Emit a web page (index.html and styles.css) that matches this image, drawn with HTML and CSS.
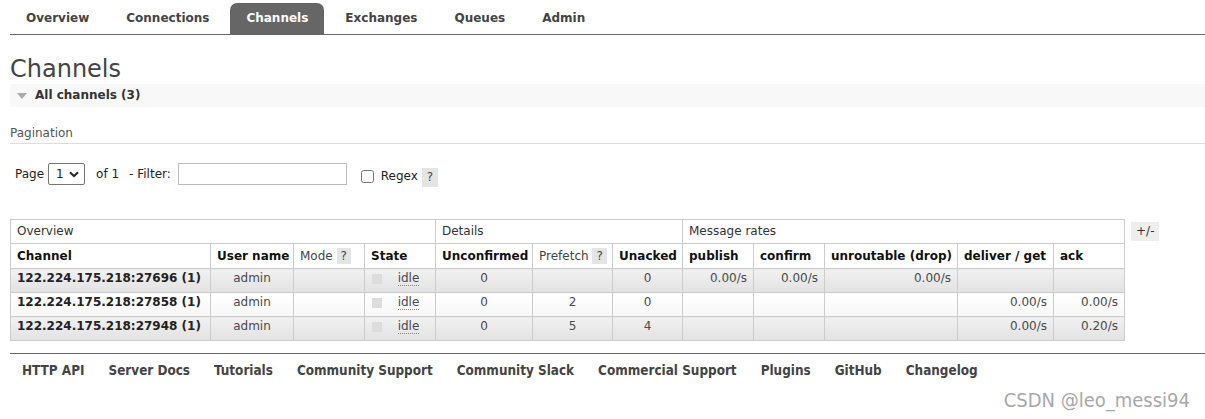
FILE: index.html
```
<!DOCTYPE html>
<html lang="en">
<head>
<meta charset="utf-8">
<title>RabbitMQ Management - Channels</title>
<link rel="stylesheet" href="styles.css">
</head>
<body>
<nav class="nav">
  <ul class="tabs">
    <li class="tab">Overview</li>
    <li class="tab">Connections</li>
    <li class="tab active">Channels</li>
    <li class="tab">Exchanges</li>
    <li class="tab">Queues</li>
    <li class="tab">Admin</li>
  </ul>
</nav>
<main class="main">
  <h1 class="title">Channels</h1>
  <div class="section-head"><span class="tri"></span>All channels (3)</div>
  <h3 class="pag-title">Pagination</h3>
  <div class="pag-row">
    <span class="lbl">Page</span>
    <span class="select-wrap">
      <select class="page-select"><option>1</option></select>
      <svg class="chev" width="10" height="7" viewBox="0 0 10 7"><path d="M1 1.2 L5 5.2 L9 1.2" fill="none" stroke="#222" stroke-width="2"/></svg>
    </span>
    <span class="lbl of">of 1</span>
    <span class="lbl filt">- Filter:</span>
    <input class="filter" type="text">
    <label class="regex"><input class="cb" type="checkbox"> Regex</label>
    <span class="help help-lg">?</span>
  </div>
  <div class="table-wrap">
    <table class="list">
      <colgroup>
        <col class="c200"><col class="c83"><col class="c71"><col class="c71">
        <col class="c97"><col class="c80"><col class="c70">
        <col class="c71"><col class="c71"><col class="c133"><col class="c96"><col class="c71">
      </colgroup>
      <thead>
        <tr class="group">
          <th colspan="4">Overview</th>
          <th colspan="3">Details</th>
          <th colspan="5">Message rates</th>
        </tr>
        <tr class="heads">
          <th>Channel</th>
          <th>User name</th>
          <th class="norm">Mode <span class="help">?</span></th>
          <th>State</th>
          <th>Unconfirmed</th>
          <th class="norm">Prefetch <span class="help">?</span></th>
          <th>Unacked</th>
          <th>publish</th>
          <th>confirm</th>
          <th>unroutable (drop)</th>
          <th>deliver / get</th>
          <th>ack</th>
        </tr>
      </thead>
      <tbody>
        <tr class="alt1">
          <td class="name">122.224.175.218:27696 (1)</td>
          <td class="c">admin</td>
          <td></td>
          <td class="state"><span class="sq"></span><abbr class="idle">idle</abbr></td>
          <td class="c">0</td>
          <td class="c"></td>
          <td class="c">0</td>
          <td class="r">0.00/s</td>
          <td class="r">0.00/s</td>
          <td class="r">0.00/s</td>
          <td class="r"></td>
          <td class="r"></td>
        </tr>
        <tr class="alt2">
          <td class="name">122.224.175.218:27858 (1)</td>
          <td class="c">admin</td>
          <td></td>
          <td class="state"><span class="sq"></span><abbr class="idle">idle</abbr></td>
          <td class="c">0</td>
          <td class="c">2</td>
          <td class="c">0</td>
          <td class="r"></td>
          <td class="r"></td>
          <td class="r"></td>
          <td class="r">0.00/s</td>
          <td class="r">0.00/s</td>
        </tr>
        <tr class="alt1">
          <td class="name">122.224.175.218:27948 (1)</td>
          <td class="c">admin</td>
          <td></td>
          <td class="state"><span class="sq"></span><abbr class="idle">idle</abbr></td>
          <td class="c">0</td>
          <td class="c">5</td>
          <td class="c">4</td>
          <td class="r"></td>
          <td class="r"></td>
          <td class="r"></td>
          <td class="r">0.00/s</td>
          <td class="r">0.20/s</td>
        </tr>
      </tbody>
    </table>
    <span class="plusminus">+/-</span>
  </div>
</main>
<footer class="footer">
  <ul class="links">
    <li>HTTP API</li>
    <li>Server Docs</li>
    <li>Tutorials</li>
    <li>Community Support</li>
    <li>Community Slack</li>
    <li>Commercial Support</li>
    <li>Plugins</li>
    <li>GitHub</li>
    <li>Changelog</li>
  </ul>
</footer>
<div class="watermark">CSDN @leo_messi94</div>
</body>
</html>
```
FILE: styles.css
```
html, body {
  margin: 0;
  padding: 0;
  background: #fff;
}
body {
  padding-left: 10px;
  font-family: "DejaVu Sans", Verdana, sans-serif;
  font-size: 12px;
  color: #444;
  position: relative;
  height: 419px;
  box-sizing: border-box;
  overflow: hidden;
}

/* nav */
.nav {
  padding-top: 3px;
  border-bottom: 1px solid #666;
}
.tabs {
  list-style: none;
  margin: 0;
  padding: 0;
  display: flex;
  gap: 5px;
}
.tab {
  font-weight: bold;
  font-size: 12px;
  line-height: 15px;
  padding: 8px 16px;
  color: #444;
  border-radius: 7px 7px 0 0;
}
.tab.active {
  background: #666;
  color: #fff;
}

/* heading */
.title {
  margin: 20px 0 0;
  font-size: 24px;
  line-height: 28px;
  font-weight: normal;
  color: #444;
}
.section-head {
  margin-top: 1px;
  height: 23px;
  line-height: 23px;
  background: #f8f8f8;
  font-weight: bold;
  color: #333;
  display: flex;
  align-items: center;
}
.tri {
  width: 0;
  height: 0;
  border-left: 5px solid transparent;
  border-right: 5px solid transparent;
  border-top: 6px solid #aaa;
  margin: 1px 8px 0 7px;
}

.pag-title {
  margin: 19px 0 0;
  font-size: 12px;
  line-height: 15px;
  font-weight: normal;
  color: #555;
  padding-bottom: 2px;
  border-bottom: 1px solid #ddd;
}

.pag-row {
  margin-top: 19px;
  padding-left: 5px;
  display: flex;
  align-items: center;
  height: 22px;
  color: #222;
}
.lbl { line-height: 15px; }
.select-wrap {
  position: relative;
  margin-left: 4px;
  display: inline-block;
  width: 37px;
  height: 22px;
}
.page-select {
  appearance: none;
  -webkit-appearance: none;
  width: 37px;
  height: 22px;
  border: 1px solid #767676;
  border-radius: 2px;
  background: #fff;
  font-family: "DejaVu Sans", Verdana, sans-serif;
  font-size: 12px;
  color: #222;
  padding: 0 0 0 7px;
  margin: 0;
}
.chev {
  position: absolute;
  right: 6px;
  top: 8px;
  pointer-events: none;
}
.of { margin-left: 11px; }
.filt { margin-left: 10px; }
.filter {
  margin: 0 0 0 7px;
  width: 169px;
  height: 22px;
  box-sizing: border-box;
  border: 1px solid #bbb;
  padding: 0 3px;
}
.regex {
  margin-left: 14px;
  display: flex;
  align-items: center;
  margin-top: 4px;
}
.cb {
  margin: 0 7px 0 0;
  width: 13px;
  height: 13px;
}
.help {
  display: inline-block;
  background: #e4e4e4;
  color: #444;
  font-weight: normal;
  padding: 0 4px;
  line-height: 16px;
}
.help-lg {
  margin-left: 4px;
  margin-top: 6px;
  padding: 1px 5px;
  line-height: 17px;
}

/* table */
.table-wrap {
  margin-top: 34px;
  display: flex;
  align-items: flex-start;
}
.list {
  border-collapse: collapse;
  table-layout: fixed;
  width: 1114px;
}
.c200 { width: 200px; }
.c83 { width: 83px; }
.c71 { width: 71px; }
.c70 { width: 70px; }
.c97 { width: 97px; }
.c80 { width: 80px; }
.c133 { width: 133px; }
.c96 { width: 96px; }
.list th, .list td {
  border: 1px solid #ccc;
  padding: 4px 6px;
  height: 15px;
  line-height: 15px;
  font-size: 12px;
  white-space: nowrap;
  overflow: hidden;
}
.list th {
  text-align: left;
  font-weight: bold;
  color: #111;
  background: #fff;
}
.list .group th {
  font-weight: normal;
  color: #333;
}
.list th.norm { font-weight: normal; color: #444; }
.list td {
  color: #4a4a4a;
  padding: 2px 6px 6px;
}
.list td.name { font-weight: bold; color: #222; }
.list td.c { text-align: center; }
.list td.r { text-align: right; }
.alt1 td { background: linear-gradient(#f1f1f1, #e2e2e2); }
.alt2 td { background: linear-gradient(#ffffff, #f7f7f7); }
.state { text-align: center; }
.sq {
  float: left;
  width: 10px;
  height: 10px;
  background: #dcdcdc;
  margin-top: 3px;
  margin-left: 1px;
}
.idle {
  text-decoration: none;
  border-bottom: 1px dotted #888;
  margin-left: 6px;
}
.plusminus {
  margin: 3px 0 0 6px;
  background: #eee;
  color: #333;
  padding: 2px 5px;
  line-height: 15px;
}

/* footer */
.footer {
  margin-top: 12px;
  border-top: 1px solid #666;
}
.links {
  list-style: none;
  margin: 0;
  padding: 9px 0 0 0;
  display: flex;
}
.links li {
  padding: 0 12px;
  font-family: "DejaVu Sans Condensed", "DejaVu Sans", sans-serif;
  font-stretch: condensed;
  font-weight: bold;
  font-size: 13.4px;
  line-height: 16px;
  color: #444;
}

.watermark {
  position: absolute;
  right: 15px;
  bottom: 7px;
  font-family: "Liberation Sans Narrow", "DejaVu Sans Condensed", sans-serif;
  font-size: 20px;
  color: #a8a8a8;
}
```
